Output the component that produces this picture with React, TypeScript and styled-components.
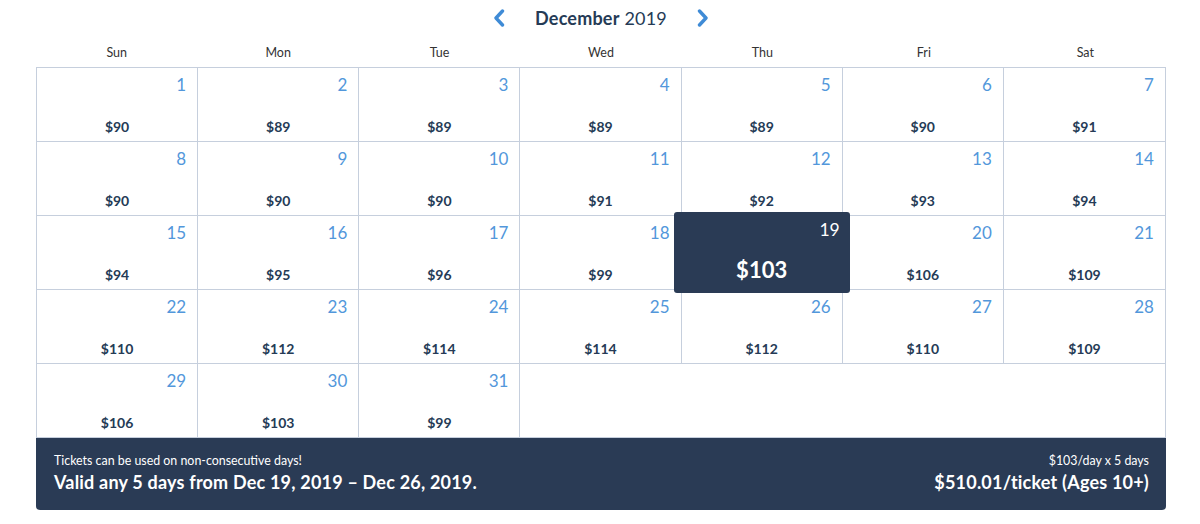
import React from "react";
import styled, { createGlobalStyle } from "styled-components";

const Global = createGlobalStyle`
  html, body { margin: 0; padding: 0; background: #fff; }
  body { font-family: Lato, "Open Sans", sans-serif; color: #253b56; }
`;

const Wrap = styled.div`
  width: 1130px;
  margin-left: 36px;
`;

const Header = styled.div`
  height: 36px;
  display: flex;
  align-items: center;
  justify-content: center;
  gap: 28px;
`;

const Arrow = styled.button`
  border: 0;
  background: none;
  padding: 0;
  width: 16px;
  height: 20px;
  display: flex;
  align-items: center;
  justify-content: center;
  cursor: pointer;
`;

const Title = styled.div`
  font-size: 18px;
  color: #253b56;
  letter-spacing: 0.2px;
  b { font-weight: 700; }
  span { font-weight: 400; }
`;

const DayNames = styled.div`
  display: grid;
  grid-template-columns: repeat(7, 1fr);
  height: 31px;
  align-items: center;
`;

const DayName = styled.div`
  text-align: center;
  font-size: 12.5px;
  color: #333;
  padding-top: 2px;
`;

const Grid = styled.div`
  display: grid;
  grid-template-columns: repeat(7, 1fr);
  grid-auto-rows: 74px;
  border: 1px solid #c6cfdd;
  border-bottom: 0;
`;

const Cell = styled.div<{ $last: boolean }>`
  position: relative;
  border-right: ${(p) => (p.$last ? "0" : "1px solid #c6cfdd")};
  border-bottom: 1px solid #c6cfdd;
  display: flex;
  flex-direction: column;
  align-items: stretch;
`;

const Empty = styled.div<{ $span: number }>`
  grid-column: span ${(p) => p.$span};
  border-bottom: 1px solid #c6cfdd;
`;

const DayNum = styled.div`
  text-align: right;
  padding: 7px 11px 0 0;
  font-size: 17px;
  font-weight: 400;
  color: #5297db;
  line-height: 20px;
`;

const Price = styled.div`
  margin-top: auto;
  padding-bottom: 6px;
  text-align: center;
  font-size: 14px;
  font-weight: 700;
  color: #253b56;
  line-height: 16px;
`;

const Selected = styled.div`
  position: absolute;
  top: -4px;
  left: -8px;
  right: -8px;
  bottom: -4px;
  background: #2a3b55;
  border-radius: 3px;
  z-index: 2;
  display: flex;
  flex-direction: column;
  color: #fff;
`;

const SelNum = styled.div`
  text-align: right;
  padding: 8px 10px 0 0;
  font-size: 17.5px;
  font-weight: 400;
  line-height: 20px;
`;

const SelPrice = styled.div`
  margin-top: auto;
  padding-bottom: 10px;
  text-align: center;
  font-size: 22px;
  font-weight: 700;
  line-height: 26px;
`;

const Footer = styled.div`
  height: 72px;
  background: #2a3b55;
  border-radius: 0 0 4px 4px;
  color: #fff;
  display: flex;
  justify-content: space-between;
  align-items: flex-end;
  padding: 0 17px 17px 18px;
  box-sizing: border-box;
`;

const Side = styled.div<{ $right?: boolean }>`
  display: flex;
  flex-direction: column;
  align-items: ${(p) => (p.$right ? "flex-end" : "flex-start")};
`;

const Small = styled.div`
  font-size: 12.4px;
  line-height: 16px;
  margin-bottom: 2px;
`;

const Big = styled.div`
  font-size: 18px;
  font-weight: 700;
  line-height: 22px;
  letter-spacing: 0.2px;
`;

const prices = [90, 89, 89, 89, 89, 90, 91, 90, 90, 90, 91, 92, 93, 94, 94, 95, 96, 99, 103, 106, 109, 110, 112, 114, 114, 112, 110, 109, 106, 103, 99];
const names = ["Sun", "Mon", "Tue", "Wed", "Thu", "Fri", "Sat"];
const SELECTED_DAY = 19;

const Chevron = ({ dir }: { dir: "l" | "r" }) => (
  <svg width="12" height="18" viewBox="0 0 12 18">
    <path
      d={dir === "l" ? "M9.5 2 L3 9 L9.5 16" : "M2.5 2 L9 9 L2.5 16"}
      fill="none"
      stroke="#3f8bd6"
      strokeWidth="3.4"
      strokeLinecap="round"
      strokeLinejoin="round"
    />
  </svg>
);

export default function App() {
  return (
    <>
      <Global />
      <Wrap>
        <Header>
          <Arrow aria-label="previous"><Chevron dir="l" /></Arrow>
          <Title><b>December</b> <span>2019</span></Title>
          <Arrow aria-label="next"><Chevron dir="r" /></Arrow>
        </Header>
        <DayNames>
          {names.map((n) => <DayName key={n}>{n}</DayName>)}
        </DayNames>
        <Grid>
          {prices.map((p, i) => {
            const day = i + 1;
            return (
              <Cell key={day} $last={i % 7 === 6}>
                {day === SELECTED_DAY ? (
                  <Selected>
                    <SelNum>{day}</SelNum>
                    <SelPrice>${p}</SelPrice>
                  </Selected>
                ) : (
                  <>
                    <DayNum>{day}</DayNum>
                    <Price>${p}</Price>
                  </>
                )}
              </Cell>
            );
          })}
          <Empty $span={4} />
        </Grid>
        <Footer>
          <Side>
            <Small>Tickets can be used on non-consecutive days!</Small>
            <Big>Valid any 5 days from Dec 19, 2019 – Dec 26, 2019.</Big>
          </Side>
          <Side $right>
            <Small>$103/day x 5 days</Small>
            <Big>$510.01/ticket (Ages 10+)</Big>
          </Side>
        </Footer>
      </Wrap>
    </>
  );
}
